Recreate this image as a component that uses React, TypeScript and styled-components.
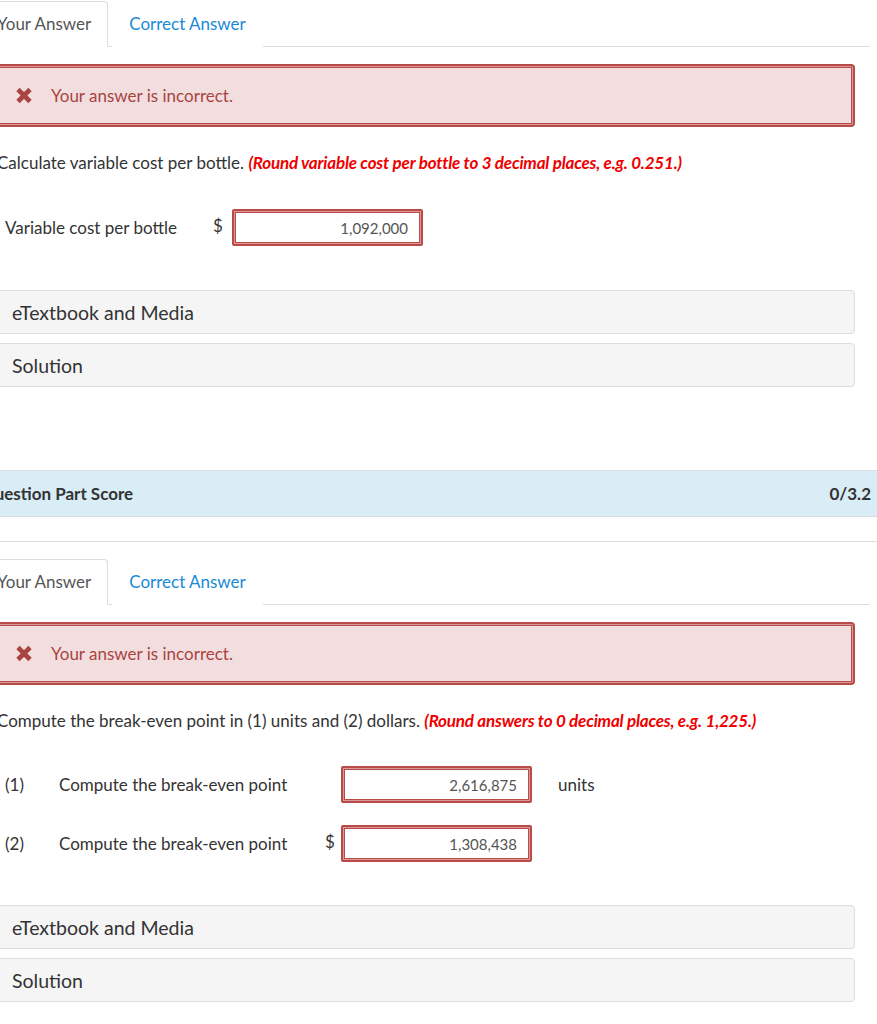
import React from 'react';
import styled, { createGlobalStyle } from 'styled-components';

const GlobalStyle = createGlobalStyle`
  html, body {
    margin: 0;
    padding: 0;
    background: #ffffff;
    overflow: hidden;
  }
  body {
    font-family: Lato, "Open Sans", "Liberation Sans", sans-serif;
    color: #333333;
    font-size: 17px;
  }
`;

const Page = styled.div`
  margin-left: -40px;
  width: calc(100% + 40px);
`;

const Section = styled.section`
  padding: 0 22px 0 20px;
`;

const TabBar = styled.div`
  display: flex;
  align-items: flex-end;
  padding-top: 1px;
  margin-right: -15px;
  border-bottom: 1px solid #dddddd;
`;

const Tab = styled.div<{ active?: boolean }>`
  height: 46px;
  line-height: 44px;
  box-sizing: border-box;
  padding: 0 16px;
  margin-left: ${({ active }) => (active ? '0' : '4px')};
  margin-bottom: -1px;
  border: 1px solid ${({ active }) => (active ? '#dddddd' : 'transparent')};
  border-bottom-color: ${({ active }) => (active ? '#ffffff' : 'transparent')};
  border-radius: 4px 4px 0 0;
  background: #ffffff;
  color: ${({ active }) => (active ? '#555555' : '#1a8ad6')};
  font-size: 17px;
`;

const Alert = styled.div`
  margin-top: 17px;
  height: 63px;
  box-sizing: border-box;
  display: flex;
  align-items: center;
  gap: 18px;
  padding-left: 33px;
  background: #f2dede;
  border: 2px solid #b94a48;
  border-radius: 4px;
  box-shadow: inset 0 0 0 1px #d99a9c, inset 0 0 0 2px #b94a48;
  color: #a94442;
  font-size: 17px;
`;

const Prompt = styled.p`
  margin: 24px 0 0 17px;
  line-height: 24px;
  font-size: 17px;
  color: #333333;
`;

const Hint = styled.strong`
  color: #ee0000;
  font-style: italic;
  font-weight: 700;
  letter-spacing: -0.2px;
`;

const FieldRow = styled.div<{ top: number; labelWidth: number }>`
  display: flex;
  align-items: center;
  margin-top: ${({ top }) => top}px;
  margin-left: 25px;
  font-size: 17px;
  color: #333333;

  & > .label {
    width: ${({ labelWidth }) => labelWidth}px;
  }
`;

const Num = styled.span`
  width: 54px;
`;

const Currency = styled.span<{ width: number }>`
  width: ${({ width }) => width}px;
  position: relative;
  top: -2px;
`;

const AnswerBox = styled.div`
  width: 191px;
  height: 37px;
  box-sizing: border-box;
  border: 2px solid #b94a48;
  border-radius: 2px;
  box-shadow: inset 0 0 0 1px #d99a9c, inset 0 0 0 2px #b94a48;
  background: #ffffff;
  display: flex;
  align-items: center;
  justify-content: flex-end;
  padding-right: 13px;
  font-size: 15px;
  color: #555555;
`;

const Unit = styled.span`
  margin-left: 26px;
`;

const Panel = styled.div<{ top: number }>`
  margin: ${({ top }) => top}px 0 0 17px;
  height: 44px;
  box-sizing: border-box;
  display: flex;
  align-items: center;
  padding-left: 14px;
  background: #f5f5f5;
  border: 1px solid #dddddd;
  border-radius: 4px;
  font-size: 19.5px;
  color: #333333;
`;

const ScoreBar = styled.div`
  margin-top: 83px;
  height: 47px;
  box-sizing: border-box;
  display: flex;
  align-items: center;
  justify-content: space-between;
  padding: 0 6px 0 21px;
  background: #d9edf7;
  border-top: 1px solid #dddddd;
  border-bottom: 1px solid #dddddd;
  font-weight: 700;
  font-size: 17px;
  color: #333333;
`;

const Divider = styled.hr`
  margin: 24px 0 16px 0;
  border: none;
  border-top: 1px solid #dddddd;
`;

const CrossIcon = () => (
  <svg width="18" height="17" viewBox="0 0 18 17">
    <path
      d="M3 2.5 L15 14.5 M15 2.5 L3 14.5"
      stroke="#a94442"
      strokeWidth="4.6"
      strokeLinecap="butt"
      fill="none"
    />
  </svg>
);

const Tabs = () => (
  <TabBar>
    <Tab active>Your Answer</Tab>
    <Tab>Correct Answer</Tab>
  </TabBar>
);

const Incorrect = () => (
  <Alert>
    <CrossIcon />
    <span>Your answer is incorrect.</span>
  </Alert>
);

export default function App() {
  return (
    <>
      <GlobalStyle />
      <Page>
        <Section>
          <Tabs />
          <Incorrect />
          <Prompt>
            Calculate variable cost per bottle.{' '}
            <Hint>(Round variable cost per bottle to 3 decimal places, e.g. 0.251.)</Hint>
          </Prompt>
          <FieldRow top={34} labelWidth={208}>
            <span className="label">Variable cost per bottle</span>
            <Currency width={19}>$</Currency>
            <AnswerBox>1,092,000</AnswerBox>
          </FieldRow>
          <Panel top={44}>eTextbook and Media</Panel>
          <Panel top={9}>Solution</Panel>
        </Section>

        <ScoreBar>
          <span>Question Part Score</span>
          <span>0/3.2</span>
        </ScoreBar>
        <Divider />

        <Section>
          <Tabs />
          <Incorrect />
          <Prompt>
            Compute the break-even point in (1) units and (2) dollars.{' '}
            <Hint>(Round answers to 0 decimal places, e.g. 1,225.)</Hint>
          </Prompt>
          <FieldRow top={33} labelWidth={266}>
            <Num>(1)</Num>
            <span className="label">Compute the break-even point</span>
            <Currency width={16}></Currency>
            <AnswerBox>2,616,875</AnswerBox>
            <Unit>units</Unit>
          </FieldRow>
          <FieldRow top={22} labelWidth={266}>
            <Num>(2)</Num>
            <span className="label">Compute the break-even point</span>
            <Currency width={16}>$</Currency>
            <AnswerBox>1,308,438</AnswerBox>
          </FieldRow>
          <Panel top={43}>eTextbook and Media</Panel>
          <Panel top={9}>Solution</Panel>
        </Section>
      </Page>
    </>
  );
}
